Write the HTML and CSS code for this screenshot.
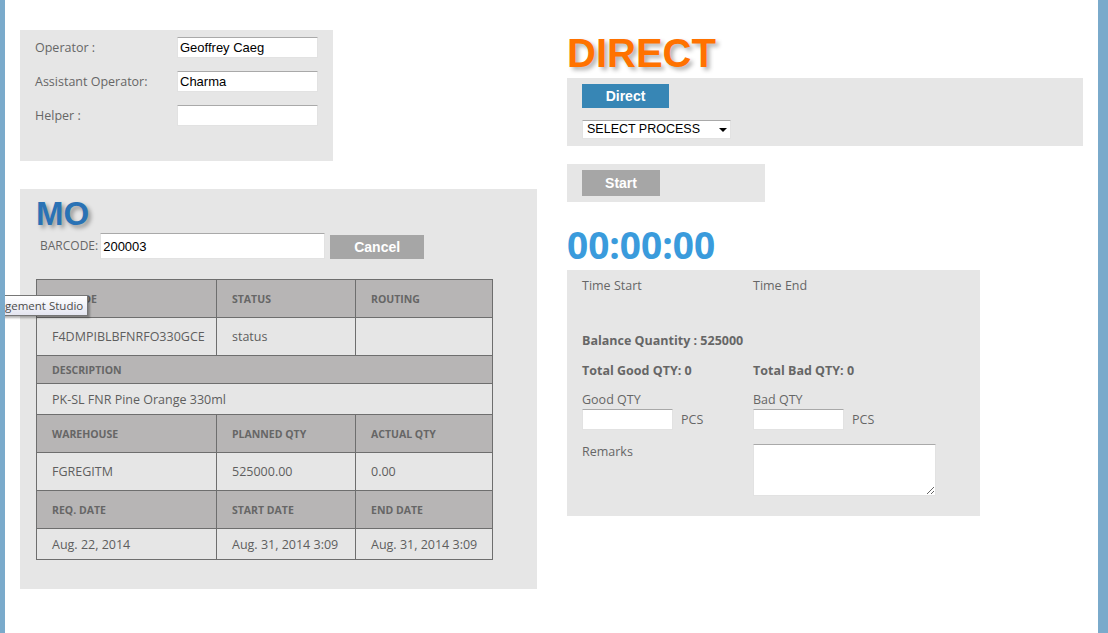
FILE: index.html
```html
<!DOCTYPE html>
<html lang="en">
<head>
<meta charset="utf-8">
<title>Production - Direct</title>
<link rel="stylesheet" href="styles.css">
</head>
<body>
<div class="page">
  <div class="col-left">
    <section class="panel crew">
      <div class="crew-row">
        <label class="lbl">Operator :</label>
        <input class="field" type="text" value="Geoffrey Caeg">
      </div>
      <div class="crew-row">
        <label class="lbl">Assistant Operator:</label>
        <input class="field" type="text" value="Charma">
      </div>
      <div class="crew-row">
        <label class="lbl">Helper :</label>
        <input class="field" type="text" value="">
      </div>
    </section>

    <section class="panel mo">
      <h1 class="title title-mo">MO</h1>
      <div class="barcode-row">
        <label class="lbl barcode-lbl">BARCODE:</label>
        <input class="field barcode" type="text" value="200003">
        <button class="btn btn-gray btn-cancel">Cancel</button>
      </div>
      <table class="mo-table">
        <colgroup><col class="c1"><col class="c2"><col class="c3"></colgroup>
        <tr class="hd tall"><th>FG CODE</th><th>STATUS</th><th>ROUTING</th></tr>
        <tr class="dt tall"><td>F4DMPIBLBFNRFO330GCE</td><td>status</td><td></td></tr>
        <tr class="hd short"><th colspan="3">DESCRIPTION</th></tr>
        <tr class="dt mid"><td colspan="3">PK-SL FNR Pine Orange 330ml</td></tr>
        <tr class="hd tall"><th>WAREHOUSE</th><th>PLANNED QTY</th><th>ACTUAL QTY</th></tr>
        <tr class="dt tall"><td>FGREGITM</td><td>525000.00</td><td>0.00</td></tr>
        <tr class="hd tall"><th>REQ. DATE</th><th>START DATE</th><th>END DATE</th></tr>
        <tr class="dt mid"><td>Aug. 22, 2014</td><td>Aug. 31, 2014 3:09</td><td>Aug. 31, 2014 3:09</td></tr>
      </table>
    </section>
  </div>

  <div class="col-right">
    <h1 class="title title-direct">DIRECT</h1>
    <section class="panel direct">
      <button class="btn btn-blue">Direct</button>
      <div class="select-wrap">
        <select class="process">
          <option>SELECT PROCESS</option>
        </select>
      </div>
    </section>
    <section class="panel start">
      <button class="btn btn-gray btn-start">Start</button>
    </section>
    <div class="timer">00:00:00</div>
    <section class="panel info">
      <div class="info-row">
        <span class="cell lbl">Time Start</span>
        <span class="cell lbl">Time End</span>
      </div>
      <div class="info-row balance">
        <span class="lbl strong">Balance Quantity : 525000</span>
      </div>
      <div class="info-row totals">
        <span class="cell lbl strong">Total Good QTY: 0</span>
        <span class="cell lbl strong">Total Bad QTY: 0</span>
      </div>
      <div class="info-row qty">
        <div class="cell">
          <div class="lbl">Good QTY</div>
          <div class="qty-line"><input class="field small" type="text"><span class="lbl pcs">PCS</span></div>
        </div>
        <div class="cell">
          <div class="lbl">Bad QTY</div>
          <div class="qty-line"><input class="field small" type="text"><span class="lbl pcs">PCS</span></div>
        </div>
      </div>
      <div class="info-row remarks">
        <span class="cell lbl">Remarks</span>
        <textarea class="remarks-box"></textarea>
      </div>
    </section>
  </div>
</div>
<div class="tooltip">gement Studio</div>
</body>
</html>
```

FILE: styles.css
```css
html, body {
  margin: 0;
  padding: 0;
}
body {
  width: 1108px;
  height: 633px;
  box-sizing: border-box;
  border-left: 5px solid #7aaacb;
  border-right: 10px solid #7aaacb;
  background: #ffffff;
  font-family: "Open Sans", "DejaVu Sans", sans-serif;
  overflow: hidden;
  position: relative;
}
.page {
  display: grid;
  grid-template-columns: 517px 516px;
  column-gap: 30px;
  padding: 30px 0 0 15px;
  align-items: start;
}
.panel {
  background: #e6e6e6;
  box-sizing: border-box;
}
.lbl {
  font-size: 12.5px;
  line-height: 18px;
  color: #666666;
}
.strong {
  font-weight: 700;
}
.field {
  box-sizing: border-box;
  border: 1px solid #e2e2e2;
  border-top-color: #a9a9a9;
  background: #ffffff;
  font-family: "Liberation Sans", Arial, sans-serif;
  font-size: 13px;
  color: #000000;
  padding: 0 2px;
  margin: 0;
  outline: none;
  border-radius: 1px;
}

/* crew panel */
.crew {
  width: 313px;
  height: 131px;
  padding: 7px 15px 0 15px;
  display: flex;
  flex-direction: column;
  gap: 13px;
  margin-bottom: 28px;
}
.crew-row {
  display: flex;
  align-items: center;
  justify-content: space-between;
  height: 21px;
}
.crew .field {
  width: 141px;
  height: 21px;
}

/* MO panel */
.mo {
  width: 517px;
  height: 400px;
  padding: 8px 16px 0 16px;
}
.title {
  margin: 0;
  font-family: "Liberation Sans", Arial, sans-serif;
  font-weight: 700;
  line-height: 1;
}
.title-mo {
  font-size: 33px;
  color: #2a72b5;
  text-shadow: 3px 3px 4px rgba(0, 0, 0, 0.35);
}
.barcode-row {
  display: flex;
  align-items: center;
  margin-top: 3px;
  padding-left: 4px;
  height: 26px;
}
.barcode-lbl {
  font-size: 12px;
  margin-right: 2px;
}
.barcode {
  width: 225px;
  height: 26px;
  font-size: 13px;
}
.btn {
  border: none;
  color: #ffffff;
  font-family: "Liberation Sans", Arial, sans-serif;
  font-weight: 700;
  font-size: 14px;
  padding: 0;
  cursor: pointer;
}
.btn-gray {
  background: #a6a6a6;
}
.btn-blue {
  background: #3786b5;
}
.btn-cancel {
  width: 94px;
  height: 24px;
  margin-left: 5px;
  align-self: flex-end;
}
.mo-table {
  margin-top: 20px;
  border-collapse: collapse;
  width: 456px;
  table-layout: fixed;
}
.mo-table .c1 { width: 180px; }
.mo-table .c2 { width: 139px; }
.mo-table .c3 { width: 137px; }
.mo-table th,
.mo-table td {
  border: 1px solid #6e6e6e;
  padding: 0 0 0 15px;
  text-align: left;
  vertical-align: middle;
  white-space: nowrap;
  overflow: hidden;
}
.mo-table th {
  background: #b7b5b5;
  font-size: 10.5px;
  font-weight: 700;
  color: #666666;
}
.mo-table td {
  background: #e6e6e6;
  font-size: 12.5px;
  color: #5e5e5e;
}
.mo-table tr.tall { height: 38px; }
.mo-table tr.short { height: 28px; }
.mo-table tr.mid { height: 31px; }

/* right column */
.title-direct {
  font-size: 40px;
  color: #ff7200;
  margin-top: 3px;
  margin-bottom: 5px;
  text-shadow: 3px 3px 4px rgba(0, 0, 0, 0.3);
}
.direct {
  width: 516px;
  height: 68px;
  padding: 6px 15px 0 15px;
}
.btn-blue {
  display: block;
  width: 87px;
  height: 24px;
}
.select-wrap {
  position: relative;
  width: 149px;
  height: 19px;
  margin-top: 12px;
}
.process {
  display: block;
  appearance: none;
  -webkit-appearance: none;
  width: 149px;
  height: 19px;
  box-sizing: border-box;
  border: 1px solid #e2e2e2;
  border-top-color: #a9a9a9;
  border-radius: 1px;
  background: #ffffff;
  font-family: "Liberation Sans", Arial, sans-serif;
  font-size: 12.5px;
  line-height: 17px;
  color: #000000;
  padding: 0 0 0 4px;
  margin: 0;
  outline: none;
}
.select-wrap::after {
  content: "";
  position: absolute;
  right: 4px;
  top: 8px;
  border-left: 4px solid transparent;
  border-right: 4px solid transparent;
  border-top: 4px solid #000000;
  pointer-events: none;
}
.start {
  width: 198px;
  height: 38px;
  margin-top: 18px;
  padding: 6px 15px 0 15px;
}
.btn-start {
  display: block;
  width: 78px;
  height: 26px;
}
.timer {
  margin-top: 24px;
  font-family: "Open Sans", sans-serif;
  font-weight: 700;
  font-size: 37px;
  line-height: 37px;
  color: #3a9bdc;
  margin-bottom: 7px;
}
.info {
  width: 413px;
  height: 246px;
  padding: 7px 0 0 15px;
}
.info-row {
  display: flex;
  align-items: flex-start;
}
.info-row .cell {
  width: 171px;
  flex: none;
}
.balance {
  margin-top: 37px;
}
.totals {
  margin-top: 12px;
}
.qty {
  margin-top: 11px;
}
.qty-line {
  display: flex;
  align-items: center;
}
.field.small {
  width: 91px;
  height: 21px;
}
.pcs {
  margin-left: 8px;
}
.remarks {
  margin-top: 13px;
}
.remarks-box {
  box-sizing: border-box;
  width: 183px;
  height: 52px;
  margin: 1px 0 0 0;
  border: 1px solid #e2e2e2;
  border-top-color: #a9a9a9;
  border-radius: 1px;
  background: #ffffff;
  font-family: "Liberation Sans", Arial, sans-serif;
  font-size: 13px;
  outline: none;
}

/* tooltip overlay */
.tooltip {
  position: absolute;
  left: -9px;
  top: 295px;
  height: 21px;
  box-sizing: border-box;
  padding: 0 4px 0 8px;
  border: 1px solid #767676;
  background: linear-gradient(#ffffff, #e4e5f0);
  font-family: "Open Sans", sans-serif;
  font-size: 11.5px;
  line-height: 19px;
  color: #4c4c4c;
  box-shadow: 2px 2px 2px rgba(0, 0, 0, 0.3);
  white-space: nowrap;
}
```
